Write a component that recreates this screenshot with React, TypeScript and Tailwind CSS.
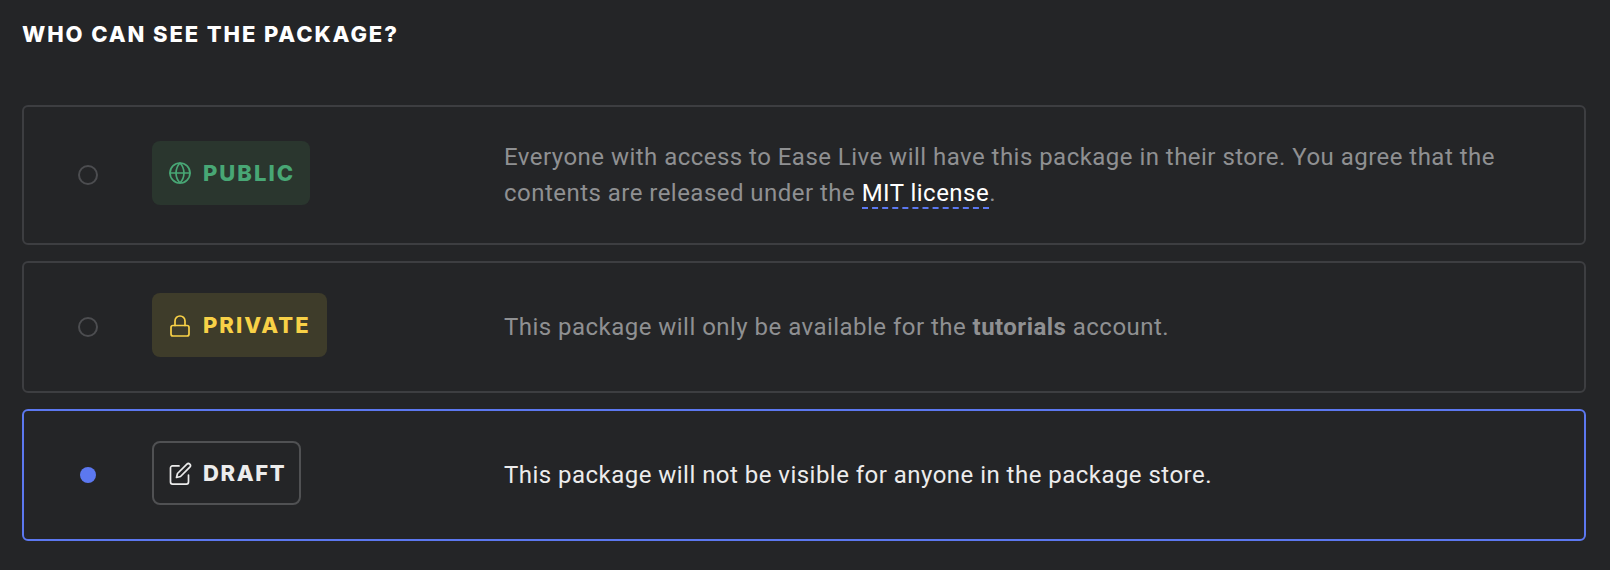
import React from "react";

const Card = ({ active, badge, children, h }: { active?: boolean; badge: React.ReactNode; children: React.ReactNode; h: string }) => (
  <div className={`flex items-center rounded-md border-2 pl-[54px] pr-[60px] ${h} ${active ? "border-[#5c78f0]" : "border-[#3d3e41]"}`}>
    <div className="flex w-[20px] justify-center">
      {active ? (
        <span className="h-4 w-4 rounded-full bg-[#5c78f0]" />
      ) : (
        <span className="h-5 w-5 rounded-full border-2 border-[#4c4d50]" />
      )}
    </div>
    <div className="mb-1 ml-[54px] w-[352px] shrink-0">{badge}</div>
    <div className={`text-[24px] leading-[36px] tracking-[0.47px] ${active ? "text-[#ececec]" : "text-[#8f9092]"}`}>{children}</div>
  </div>
);

const Badge = ({ cls, icon, label }: { cls: string; icon: React.ReactNode; label: string }) => (
  <span className={`flex h-16 w-fit items-center gap-[11px] rounded-lg font-['Inter',sans-serif] text-[22px] font-extrabold ${cls}`}>
    {icon}
    {label}
  </span>
);

const Ic = ({ children }: { children: React.ReactNode }) => (
  <svg width="24" height="24" viewBox="0 0 24 24" fill="none" stroke="currentColor" strokeWidth="1.7" strokeLinecap="round" strokeLinejoin="round">
    {children}
  </svg>
);

export default function App() {
  return (
    <div className="flex h-[570px] w-[1610px] flex-col bg-[#242527] pl-[22px] pr-[24px] font-['Roboto',sans-serif]">
      <h2 className="mt-[20px] font-['Inter',sans-serif] text-[22px] font-extrabold uppercase leading-[28px] tracking-[1.9px] text-white">
        Who can see the package?
      </h2>
      <div className="mt-[57px] flex flex-col gap-[16px]">
        <Card
          h="h-[140px]"
          badge={
            <Badge
              cls="bg-[#2a362e] pl-4 pr-[15px] tracking-[2px] text-[#48a775]"
              label="PUBLIC"
              icon={
                <Ic>
                  <circle cx="12" cy="12" r="10" />
                  <path d="M2 12h20" />
                  <path d="M12 2a15 15 0 0 1 4 10 15 15 0 0 1-4 10 15 15 0 0 1-4-10 15 15 0 0 1 4-10z" />
                </Ic>
              }
            />
          }
        >
          Everyone with access to Ease Live will have this package in their store. You agree that the
          <br />
          contents are released under the{" "}
          <span className="border-b-2 border-dashed border-[#5c78f0] text-white">MIT license</span>.
        </Card>
        <Card
          h="h-[132px]"
          badge={
            <Badge
              cls="bg-[#3e3c2a] pl-4 pr-[16px] tracking-[2px] text-[#f8d147]"
              label="PRIVATE"
              icon={
                <Ic>
                  <rect x="3" y="12.5" width="18" height="10.5" rx="2" />
                  <path d="M7 12.5V8a5 5 0 0 1 10 0v4.5" />
                </Ic>
              }
            />
          }
        >
          This package will only be available for the <b className="font-bold">tutorials</b> account.
        </Card>
        <Card
          active
          h="h-[132px]"
          badge={
            <Badge
              cls="border-2 border-[#505153] pl-[14px] pr-[13px] tracking-[1.6px] text-[#ececec]"
              label="DRAFT"
              icon={
                <Ic>
                  <path d="M11 4.9H4.5a2 2 0 0 0-2 2v14.2a2 2 0 0 0 2 2h14a2 2 0 0 0 2-2v-7" />
                  <path d="M18.9 3.2a2 2 0 0 1 2.9 2.9L12.5 15.5l-4 1 1-4z" />
                </Ic>
              }
            />
          }
        >
          This package will not be visible for anyone in the package store.
        </Card>
      </div>
    </div>
  );
}
